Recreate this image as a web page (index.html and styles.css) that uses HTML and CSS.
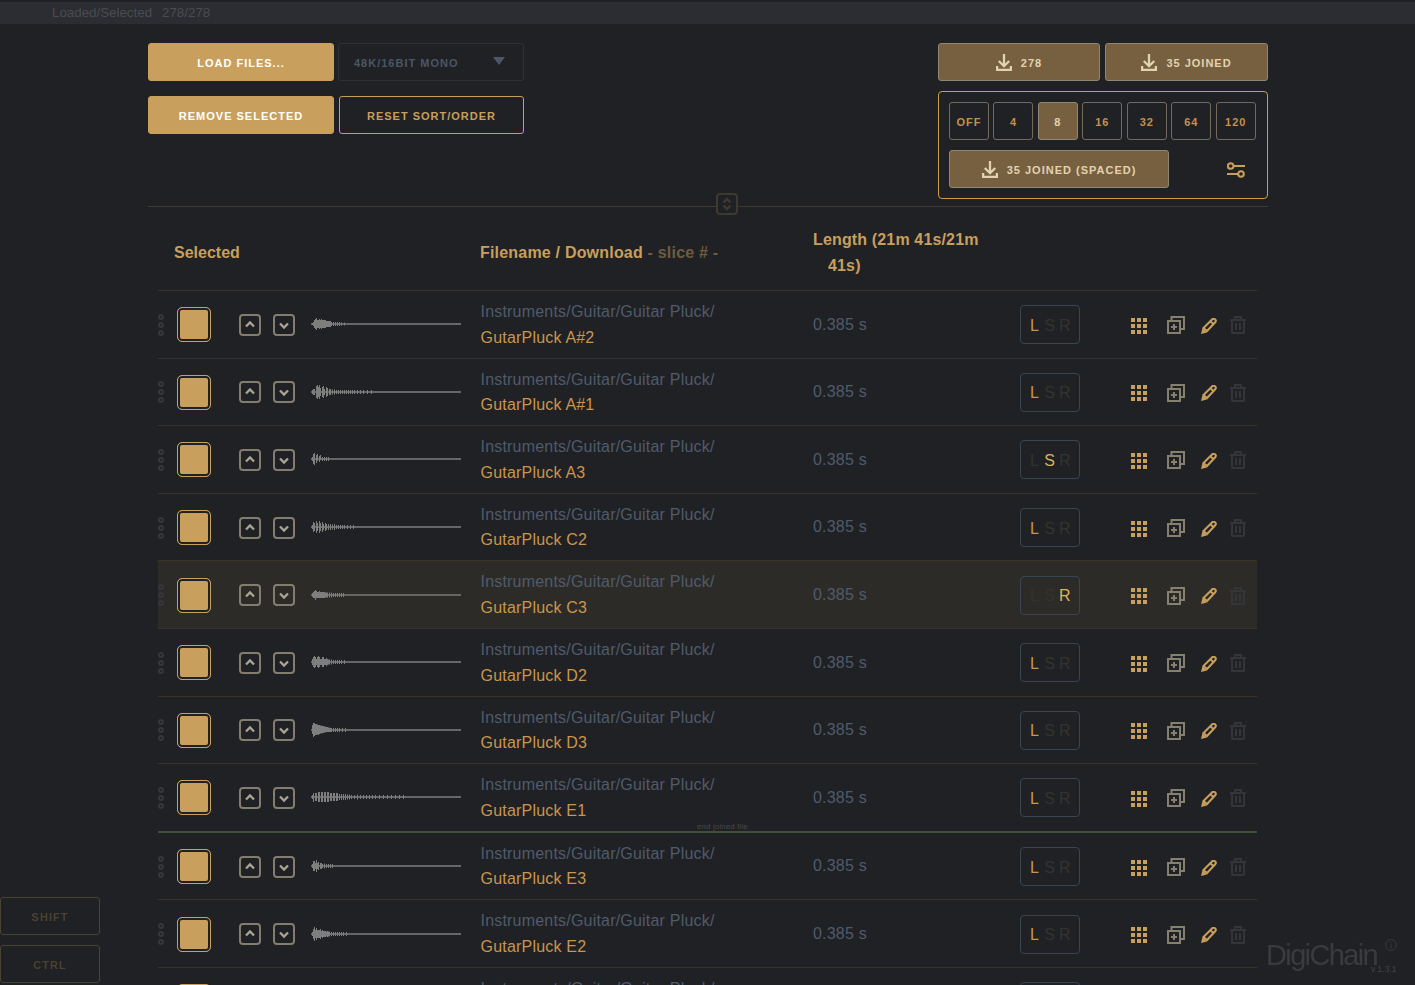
FILE: index.html
```html
<!DOCTYPE html>
<html lang="en">
<head>
<meta charset="utf-8">
<title>DigiChain</title>
<link rel="stylesheet" href="styles.css">
</head>
<body>
<svg class="defs" width="0" height="0" aria-hidden="true">
  <symbol id="i-dl" viewBox="0 0 16 17"><path d="M8 0v12M2.800 7 8 12.200 13.200 7M1.100 12v3.900h13.800V12" fill="none" stroke="currentColor" stroke-width="2.300"/></symbol>
  <symbol id="i-up" viewBox="0 0 18 18"><path d="M5 10.500 9 6.500l4 4" fill="none" stroke="currentColor" stroke-width="2.300"/></symbol>
  <symbol id="i-down" viewBox="0 0 18 18"><path d="M5 7.500l4 4 4-4" fill="none" stroke="currentColor" stroke-width="2.300"/></symbol>
  <symbol id="i-grid" viewBox="0 0 16 16"><path d="M0 0h4v4H0zM6 0h4v4H6zM12 0h4v4h-4zM0 6h4v4H0zM6 6h4v4H6zM12 6h4v4h-4zM0 12h4v4H0zM6 12h4v4H6zM12 12h4v4h-4z" fill="currentColor"/></symbol>
  <symbol id="i-copy" viewBox="0 0 18 18"><path d="M1 5h12v12H1zM4.500 5V1H17v12h-4M7 8v6M4 11h6" fill="none" stroke="currentColor" stroke-width="2"/></symbol>
  <symbol id="i-pencil" viewBox="0 0 16 16"><path d="M0 16l1.500-6 4.500 4.500z" fill="currentColor"/><path d="M2.500 10 11 1.500c1-1 2-1 3-.2s1 2 .2 3L6 13zM9.500 3.500l3.500 3" fill="none" stroke="currentColor" stroke-width="2"/></symbol>
  <symbol id="i-trash" viewBox="0 0 16 18"><path d="M0 4h16M5 4V1h6v3M2 4v12.500q0 .5.500.5h11q.5 0 .5-.5V4M6 7v7M10 7v7" fill="none" stroke="currentColor" stroke-width="2"/></symbol>
  <symbol id="i-sort" viewBox="0 0 18 18"><path d="M5.500 7.500 9 4l3.500 3.500M5.500 10.500 9 14l3.500-3.500" fill="none" stroke="currentColor" stroke-width="2.300"/></symbol>
  <symbol id="i-sliders" viewBox="0 0 18 16"><circle cx="3.700" cy="4" r="2.800" fill="none" stroke="currentColor" stroke-width="2"/><circle cx="14" cy="12" r="2.800" fill="none" stroke="currentColor" stroke-width="2"/><path d="M6.500 4H18M0 12h11" fill="none" stroke="currentColor" stroke-width="2"/></symbol>
  <symbol id="i-info" viewBox="0 0 12 12"><circle cx="6" cy="6" r="5.400" fill="none" stroke="currentColor"/><path d="M6 3v1M6 5.200V9" fill="none" stroke="currentColor"/></symbol>
</svg>

<div class="topbar"><span>Loaded/Selected</span><span class="count">278/278</span></div>

<main class="main">
  <section class="controls">
    <div class="left-controls">
      <button class="btn btn-solid">LOAD FILES...</button>
      <div class="select"><span>48K/16BIT MONO</span><i class="caret"></i></div>
      <button class="btn btn-solid">REMOVE SELECTED</button>
      <button class="btn btn-outline">RESET SORT/ORDER</button>
    </div>
    <div class="right-controls">
      <div class="dl-row">
        <button class="btn btn-dl dl-a"><svg class="ic-dl"><use href="#i-dl"/></svg>278</button>
        <button class="btn btn-dl dl-b"><svg class="ic-dl"><use href="#i-dl"/></svg>35 JOINED</button>
      </div>
      <div class="panel">
        <div class="chips">
          <button class="chip">OFF</button>
          <button class="chip">4</button>
          <button class="chip chip-on">8</button>
          <button class="chip">16</button>
          <button class="chip">32</button>
          <button class="chip">64</button>
          <button class="chip">120</button>
        </div>
        <div class="panel-bottom">
          <button class="btn btn-dl dl-c"><svg class="ic-dl"><use href="#i-dl"/></svg>35 JOINED (SPACED)</button>
          <svg class="ic-sliders"><use href="#i-sliders"/></svg>
        </div>
      </div>
    </div>
  </section>

  <div class="divider"><span class="handle"><svg><use href="#i-sort"/></svg></span></div>

  <section class="table">
    <div class="head">
      <div class="h-sel">Selected</div>
      <div class="h-name">Filename / Download<span class="dim"> - slice # -</span></div>
      <div class="h-len">Length (21m 41s/21m<span class="h-len2">41s)</span></div>
    </div>

    <div class="row">
      <div class="grip"><i></i><i></i><i></i></div><div class="check"></div>
      <div class="arrow first"><svg><use href="#i-up"/></svg></div><div class="arrow second"><svg><use href="#i-down"/></svg></div>
      <svg class="wave" viewBox="0 0 150 20"><path class="base" d="M0 10H150"/><path class="bars" d="M1 9v2M2 8v4M3 6v8M4 5v10M5 4v12M6 6v8M7 6v8M8 5v10M9 6v8M10 5v10M11 6v8M12 6v8M13 6v8M14 6v8M15 7v6M16 7v6M17 7v6M18 7v6M19 7v6M20 8v4M22 8v4M24 8v4M26 8v4M28 8v4M30 8.500v3M33 8.500v3"/></svg>
      <div class="name"><div class="path">Instruments/Guitar/Guitar Pluck/</div><div class="file">GutarPluck A#2</div></div>
      <div class="len">0.385 s</div>
      <div class="lsr"><span class="on">L</span><span>S</span><span>R</span></div>
      <svg class="ic grid"><use href="#i-grid"/></svg><svg class="ic copy"><use href="#i-copy"/></svg><svg class="ic pencil"><use href="#i-pencil"/></svg><svg class="ic trash"><use href="#i-trash"/></svg>
    </div>

    <div class="row">
      <div class="grip"><i></i><i></i><i></i></div><div class="check"></div>
      <div class="arrow first"><svg><use href="#i-up"/></svg></div><div class="arrow second"><svg><use href="#i-down"/></svg></div>
      <svg class="wave" viewBox="0 0 150 20"><path class="base" d="M0 10H150"/><path class="bars" d="M1 8v4M2 7v6M3 7v6M5 4v12M6 3v14M7 5v10M8 3v14M9 6v8M11 5v10M12 4v12M13 7v6M15 5v10M16 6v8M18 7v6M19 7v6M21 7.500v5M23 7.500v5M25 8v4M27 8v4M29 8v4M31 8v4M33 8v4M35 8v4M37 8v4M39 8v4M41 8v4M43 8v4M46 8v4M49 8v4M52 8v4M56 8v4M60 8v4"/></svg>
      <div class="name"><div class="path">Instruments/Guitar/Guitar Pluck/</div><div class="file">GutarPluck A#1</div></div>
      <div class="len">0.385 s</div>
      <div class="lsr"><span class="on">L</span><span>S</span><span>R</span></div>
      <svg class="ic grid"><use href="#i-grid"/></svg><svg class="ic copy"><use href="#i-copy"/></svg><svg class="ic pencil"><use href="#i-pencil"/></svg><svg class="ic trash"><use href="#i-trash"/></svg>
    </div>

    <div class="row">
      <div class="grip"><i></i><i></i><i></i></div><div class="check"></div>
      <div class="arrow first"><svg><use href="#i-up"/></svg></div><div class="arrow second"><svg><use href="#i-down"/></svg></div>
      <svg class="wave" viewBox="0 0 150 20"><path class="base" d="M0 10H150"/><path class="bars" d="M1 8v4M2 5v10M3 4v12M5 6v8M6 5v7M8 7v6M9 6v5M11 8v4M13 8v4M15 8v4M17 8v4"/></svg>
      <div class="name"><div class="path">Instruments/Guitar/Guitar Pluck/</div><div class="file">GutarPluck A3</div></div>
      <div class="len">0.385 s</div>
      <div class="lsr"><span>L</span><span class="on-s">S</span><span>R</span></div>
      <svg class="ic grid"><use href="#i-grid"/></svg><svg class="ic copy"><use href="#i-copy"/></svg><svg class="ic pencil"><use href="#i-pencil"/></svg><svg class="ic trash"><use href="#i-trash"/></svg>
    </div>

    <div class="row">
      <div class="grip"><i></i><i></i><i></i></div><div class="check"></div>
      <div class="arrow first"><svg><use href="#i-up"/></svg></div><div class="arrow second"><svg><use href="#i-down"/></svg></div>
      <svg class="wave" viewBox="0 0 150 20"><path class="base" d="M0 10H150"/><path class="bars" d="M1 8v4M2 5v10M3 6v8M5 4v12M6 6v8M8 4v12M9 6v8M11 5v10M12 7v6M14 6v8M15 7v6M17 7v6M19 7v6M21 7.500v5M23 7v6M25 8v4M27 8v4M29 8v4M31 8v4M33 8v4M36 8v4M39 8v4M42 8v4"/></svg>
      <div class="name"><div class="path">Instruments/Guitar/Guitar Pluck/</div><div class="file">GutarPluck C2</div></div>
      <div class="len">0.385 s</div>
      <div class="lsr"><span class="on">L</span><span>S</span><span>R</span></div>
      <svg class="ic grid"><use href="#i-grid"/></svg><svg class="ic copy"><use href="#i-copy"/></svg><svg class="ic pencil"><use href="#i-pencil"/></svg><svg class="ic trash"><use href="#i-trash"/></svg>
    </div>

    <div class="row row-hover">
      <div class="grip"><i></i><i></i><i></i></div><div class="check"></div>
      <div class="arrow first"><svg><use href="#i-up"/></svg></div><div class="arrow second"><svg><use href="#i-down"/></svg></div>
      <svg class="wave" viewBox="0 0 150 20"><path class="base" d="M0 10H150"/><path class="bars" d="M1 8v4M2 7v6M3 6v7M4 5v10M5 6v7M6 7v6M7 7v6M8 6v7M9 7v6M10 7v6M11 7v6M12 7v6M13 7v6M14 7.500v5M15 7.500v5M16 7.500v5M18 7.500v5M20 7.500v5M22 8v4M24 8v4M26 8v4M28 8v4M30 8v4M32 8v4"/></svg>
      <div class="name"><div class="path">Instruments/Guitar/Guitar Pluck/</div><div class="file">GutarPluck C3</div></div>
      <div class="len">0.385 s</div>
      <div class="lsr"><span>L</span><span>S</span><span class="on-s">R</span></div>
      <svg class="ic grid"><use href="#i-grid"/></svg><svg class="ic copy"><use href="#i-copy"/></svg><svg class="ic pencil"><use href="#i-pencil"/></svg><svg class="ic trash"><use href="#i-trash"/></svg>
    </div>

    <div class="row">
      <div class="grip"><i></i><i></i><i></i></div><div class="check"></div>
      <div class="arrow first"><svg><use href="#i-up"/></svg></div><div class="arrow second"><svg><use href="#i-down"/></svg></div>
      <svg class="wave" viewBox="0 0 150 20"><path class="base" d="M0 10H150"/><path class="bars" d="M1 7v6M2 5v10M3 4v12M4 5v10M5 7v6M6 5v10M7 4v12M8 5v10M9 7v6M10 7v6M11 5v10M12 5v10M13 7v6M14 7v6M15 6v8M16 7v6M17 7.500v5M18 7.500v5M20 7.500v5M22 8v4M24 8v4M26 8v4M28 8v4M30 8v4M33 8v4"/></svg>
      <div class="name"><div class="path">Instruments/Guitar/Guitar Pluck/</div><div class="file">GutarPluck D2</div></div>
      <div class="len">0.385 s</div>
      <div class="lsr"><span class="on">L</span><span>S</span><span>R</span></div>
      <svg class="ic grid"><use href="#i-grid"/></svg><svg class="ic copy"><use href="#i-copy"/></svg><svg class="ic pencil"><use href="#i-pencil"/></svg><svg class="ic trash"><use href="#i-trash"/></svg>
    </div>

    <div class="row">
      <div class="grip"><i></i><i></i><i></i></div><div class="check"></div>
      <div class="arrow first"><svg><use href="#i-up"/></svg></div><div class="arrow second"><svg><use href="#i-down"/></svg></div>
      <svg class="wave" viewBox="0 0 150 20"><path class="base" d="M0 10H150"/><path class="bars" d="M1 5v9M2 3v14M3 3v13M4 4v11M5 4v11M6 4.500v10M7 5v10M8 5v9M9 5.500v8M10 5.500v8M11 6v7M12 6v7M13 6.500v6M14 6.500v6M15 7v5M16 7v5M17 7.500v4.500M18 7.500v4.500M19 8v4M20 8v4M22 8v4M24 8v4M26 8v4M28 8v4M31 8v4M34 8v4"/></svg>
      <div class="name"><div class="path">Instruments/Guitar/Guitar Pluck/</div><div class="file">GutarPluck D3</div></div>
      <div class="len">0.385 s</div>
      <div class="lsr"><span class="on">L</span><span>S</span><span>R</span></div>
      <svg class="ic grid"><use href="#i-grid"/></svg><svg class="ic copy"><use href="#i-copy"/></svg><svg class="ic pencil"><use href="#i-pencil"/></svg><svg class="ic trash"><use href="#i-trash"/></svg>
    </div>

    <div class="row row-end">
      <div class="grip"><i></i><i></i><i></i></div><div class="check"></div>
      <div class="arrow first"><svg><use href="#i-up"/></svg></div><div class="arrow second"><svg><use href="#i-down"/></svg></div>
      <svg class="wave" viewBox="0 0 150 20"><path class="base" d="M0 10H150"/><path class="bars" d="M1 8v4M2 6v9M4 6v8M5 6v8M7 5v10M8 5v10M10 5v10M11 5v10M13 5v10M14 5v10M16 5v10M17 5v10M19 6v8M20 6v8M22 6v8M23 6v8M25 6v8M26 6v8M28 7v6M30 7v6M32 7v6M34 7v6M36 7.500v5M38 7.500v5M40 8v4M43 8v4M46 7.500v5M49 8v4M52 8v4M55 8v4M58 8v4M61 8v4M64 8v4M68 8v4M72 8v4M76 8v4M80 8v4M84 8v4M88 8v4M92 8v4"/></svg>
      <div class="name"><div class="path">Instruments/Guitar/Guitar Pluck/</div><div class="file">GutarPluck E1</div></div>
      <div class="len">0.385 s</div>
      <div class="lsr"><span class="on">L</span><span>S</span><span>R</span></div>
      <svg class="ic grid"><use href="#i-grid"/></svg><svg class="ic copy"><use href="#i-copy"/></svg><svg class="ic pencil"><use href="#i-pencil"/></svg><svg class="ic trash"><use href="#i-trash"/></svg>
      <span class="end-label">end joined file</span>
    </div>

    <div class="row">
      <div class="grip"><i></i><i></i><i></i></div><div class="check"></div>
      <div class="arrow first"><svg><use href="#i-up"/></svg></div><div class="arrow second"><svg><use href="#i-down"/></svg></div>
      <svg class="wave" viewBox="0 0 150 20"><path class="base" d="M0 10H150"/><path class="bars" d="M1 8v4M2 5v10M3 5v10M4 7v6M5 4v12M6 7v6M7 6v8M9 7v6M10 7v6M11 8v4M13 7.500v5M15 8v4M17 8v4M19 8v4M21 8v4"/></svg>
      <div class="name"><div class="path">Instruments/Guitar/Guitar Pluck/</div><div class="file">GutarPluck E3</div></div>
      <div class="len">0.385 s</div>
      <div class="lsr"><span class="on">L</span><span>S</span><span>R</span></div>
      <svg class="ic grid"><use href="#i-grid"/></svg><svg class="ic copy"><use href="#i-copy"/></svg><svg class="ic pencil"><use href="#i-pencil"/></svg><svg class="ic trash"><use href="#i-trash"/></svg>
    </div>

    <div class="row">
      <div class="grip"><i></i><i></i><i></i></div><div class="check"></div>
      <div class="arrow first"><svg><use href="#i-up"/></svg></div><div class="arrow second"><svg><use href="#i-down"/></svg></div>
      <svg class="wave" viewBox="0 0 150 20"><path class="base" d="M0 10H150"/><path class="bars" d="M1 8v4M2 5v10M3 3v14M4 6v8M5 4v12M6 6v8M7 6v8M8 6v8M9 5v10M10 7v6M11 6v8M12 7v6M13 7v6M14 7v6M15 7.500v5M16 7v6M17 7.500v5M18 7.500v5M20 8v4M22 8v4M24 8v4M26 8v4M28 8v4M30 8v4M32 8v4M35 8v4"/></svg>
      <div class="name"><div class="path">Instruments/Guitar/Guitar Pluck/</div><div class="file">GutarPluck E2</div></div>
      <div class="len">0.385 s</div>
      <div class="lsr"><span class="on">L</span><span>S</span><span>R</span></div>
      <svg class="ic grid"><use href="#i-grid"/></svg><svg class="ic copy"><use href="#i-copy"/></svg><svg class="ic pencil"><use href="#i-pencil"/></svg><svg class="ic trash"><use href="#i-trash"/></svg>
    </div>

    <div class="row">
      <div class="grip"><i></i><i></i><i></i></div><div class="check"></div>
      <div class="arrow first"><svg><use href="#i-up"/></svg></div><div class="arrow second"><svg><use href="#i-down"/></svg></div>
      <svg class="wave" viewBox="0 0 150 20"><path class="base" d="M0 10H150"/></svg>
      <div class="name"><div class="path">Instruments/Guitar/Guitar Pluck/</div><div class="file">GutarPluck F1</div></div>
      <div class="len">0.385 s</div>
      <div class="lsr"><span class="on">L</span><span>S</span><span>R</span></div>
      <svg class="ic grid"><use href="#i-grid"/></svg><svg class="ic copy"><use href="#i-copy"/></svg><svg class="ic pencil"><use href="#i-pencil"/></svg><svg class="ic trash"><use href="#i-trash"/></svg>
    </div>
  </section>
</main>

<div class="keys">
  <button class="key">SHIFT</button>
  <button class="key">CTRL</button>
</div>

<div class="logo">
  <span class="logo-name">DigiChain</span>
  <svg class="logo-info"><use href="#i-info"/></svg>
  <span class="logo-ver">v 1.3.1</span>
</div>
</body>
</html>
```

FILE: styles.css
```css
* { box-sizing: border-box; }

html, body {
  margin: 0;
  height: 100%;
  overflow: hidden;
  background: #202125;
  font-family: "Liberation Sans", Arial, sans-serif;
}

.defs { position: absolute; }

button { font-family: inherit; cursor: pointer; }

.topbar {
  margin-top: 2px;
  height: 22px;
  padding-left: 52px;
  background: #2b2d32;
  color: #4a4c51;
  font-size: 13.330px;
  line-height: 21px;
  display: flex;
}
.count { margin-left: 10px; }

.main { width: 1120px; margin-left: 148px; }

.controls {
  display: flex;
  justify-content: space-between;
  align-items: flex-start;
  padding-top: 19px;
}

.left-controls {
  display: grid;
  grid-template-columns: 186px 186px;
  grid-auto-rows: 38px;
  column-gap: 4px;
  row-gap: 15px;
}

.btn {
  height: 38px;
  padding: 2px 0 0;
  border-radius: 3px;
  font-size: 11px;
  font-weight: 700;
  letter-spacing: 1px;
}
.btn-solid { background: #c89f5d; border: 1px solid #c89f5d; color: #fff; }
.btn-outline { background: transparent; border: 1px solid #c89f5d; color: #c89f5d; margin-left: 1px; width: 185px; }

.select {
  display: flex;
  align-items: center;
  justify-content: space-between;
  padding: 1px 18px 0 15px;
  border: 1px solid #2f3136;
  border-radius: 3px;
  color: #4b5666;
  font-size: 11px;
  font-weight: 700;
  letter-spacing: 1px;
}
.caret {
  width: 0;
  height: 0;
  border-left: 6px solid transparent;
  border-right: 6px solid transparent;
  border-top: 8px solid #4b5666;
  margin-bottom: 4px;
}

.right-controls { width: 330px; }

.dl-row { display: flex; gap: 5px; }

.btn-dl {
  display: flex;
  align-items: center;
  justify-content: center;
  background: #76603f;
  border: 1px solid #918672;
  color: #e3d2af;
}
.dl-a { width: 162px; }
.dl-b { width: 163px; }
.dl-c { width: 220px; }

.ic-dl { width: 16px; height: 17px; margin: -2px 9px 0 0; }

.panel {
  margin-top: 10px;
  height: 108px;
  padding: 10px;
  border: 1px solid #cb9b45;
  border-radius: 4px;
}

.chips { display: flex; justify-content: space-between; width: 306.800px; }

.chip {
  width: 40px;
  height: 38px;
  padding: 2px 0 0;
  background: transparent;
  border: 1px solid #716b5e;
  border-radius: 3px;
  color: #c4904f;
  font-size: 11px;
  font-weight: 700;
  letter-spacing: 1px;
}
.chip-on { background: #76603f; border-color: #918672; color: #e3d2af; }

.panel-bottom { display: flex; align-items: center; margin-top: 10px; }
.ic-sliders { width: 18px; height: 16px; margin: 2px 0 0 58px; color: #c89f5d; }

.divider {
  position: relative;
  margin-top: 7px;
  border-top: 1px solid #3f382b;
}
.handle {
  position: absolute;
  left: 568px;
  top: -14px;
  width: 22px;
  height: 22px;
  background: #202125;
  border: 2px solid #3f3a2e;
  border-radius: 4px;
  color: #3f3a2e;
}
.handle svg { display: block; width: 18px; height: 18px; }

.table { width: 1099px; margin-left: 10px; }

.head {
  display: flex;
  align-items: center;
  height: 84px;
  padding-top: 8px;
  border-bottom: 1px solid #3a3428;
  color: #c89f5d;
  font-size: 16px;
  font-weight: 700;
  line-height: 26px;
}
.h-sel { width: 322px; padding-left: 16px; }
.h-name { width: 333px; letter-spacing: 0.200px; }
.dim { color: #6e5c3f; }
.h-len { width: 175px; letter-spacing: 0.150px; }
.h-len2 { display: block; margin-left: 15px; }

.row {
  position: relative;
  display: flex;
  align-items: center;
  height: 67.6px;
  padding-top: 1px;
  border-bottom: 1px solid #3a3428;
}
.row-hover { background: #2d2b28; }
.row-end { height: 68.600px; border-bottom: 2px solid #3c5138; }

.grip { width: 6px; display: flex; flex-direction: column; gap: 2px; }
.grip i {
  display: block;
  width: 6px;
  height: 6px;
  border: 2px solid #35373b;
  border-radius: 50%;
}

.check {
  width: 34px;
  height: 35px;
  margin-left: 13px;
  border: 1px solid #c89f5d;
  border-radius: 5px;
  background: #c89f5d;
  box-shadow: inset 0 0 0 2px #202125;
}

.arrow {
  width: 22px;
  height: 22px;
  border: 2px solid #827d6e;
  border-radius: 4px;
  color: #aaa595;
}
.arrow svg { display: block; width: 18px; height: 18px; }
.first { margin-left: 28px; }
.second { margin-left: 12px; }

.wave { width: 150px; height: 20px; margin: 0 0 1px 16px; flex: none; }
.base { stroke: #666; stroke-width: 2; fill: none; }
.bars { stroke: #7e7e7e; stroke-width: 1; fill: none; transform: translateX(0.500px); }

.name { width: 332.500px; margin: 0 0 0.500px 19.500px; font-size: 16px; line-height: 25.500px; letter-spacing: 0.200px; }
.path { color: #4f5b6b; }
.file { color: #c8964c; }

.len { width: 207px; margin-bottom: 0.500px; color: #4f5b6b; font-size: 16px; letter-spacing: 0.200px; }

.lsr {
  display: flex;
  gap: 4px;
  align-items: center;
  width: 60px;
  height: 39px;
  padding: 2px 0 0 8px;
  border: 1px solid #384553;
  border-radius: 4px;
  color: #35332d;
  font-size: 16px;
}
.lsr span { width: 11px; text-align: center; }
.lsr .on { color: #c8964c; }
.lsr .on-s { color: #dcb264; }

.ic { flex: none; }
.grid { width: 16px; height: 16px; margin: 2px 0 0 51px; color: #c89f5d; }
.copy { width: 18px; height: 18px; margin: 1px 0 0 20px; color: #86816f; }
.pencil { width: 16px; height: 16px; margin: 2px 0 0 16px; color: #c89f5d; }
.trash { width: 16px; height: 18px; margin: 1px 0 0 13px; color: #333539; }

.end-label {
  position: absolute;
  left: 539px;
  bottom: 0;
  color: #46484c;
  font-size: 8px;
  line-height: 9px;
  letter-spacing: 0.100px;
  white-space: nowrap;
}

.keys {
  position: fixed;
  left: 0;
  top: 897px;
  display: flex;
  flex-direction: column;
  gap: 10px;
}
.key {
  width: 100px;
  height: 38px;
  padding: 2px 0 0;
  background: transparent;
  border: 1px solid #4b4232;
  border-radius: 3px;
  color: #4b4232;
  font-size: 11px;
  font-weight: 700;
  letter-spacing: 1px;
}

.logo { position: fixed; left: 1266px; top: 935px; width: 149px; height: 50px; color: #393b3f; }
.logo-name { position: absolute; left: 0; top: 3px; font-size: 29px; line-height: 34px; letter-spacing: -1.630px; }
.logo-info { position: absolute; left: 119px; top: 4px; width: 12px; height: 12px; }
.logo-ver { position: absolute; left: 105px; top: 29px; color: #43454a; font-size: 8.500px; line-height: 10px; }
```
